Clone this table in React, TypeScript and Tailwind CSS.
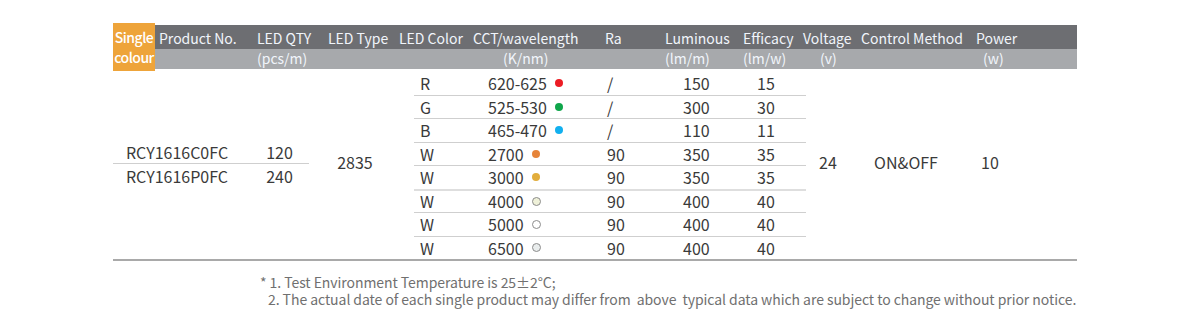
const font = { fontFamily: '"Noto Sans CJK SC", "Noto Sans", sans-serif' };

type Row = { color: string; cct: string; dot: string; ra: string; lum: string; eff: string };

const rows: Row[] = [
  { color: 'R', cct: '620-625', dot: 'w-[8px] h-[8px] bg-[#ec1c24]', ra: '/', lum: '150', eff: '15' },
  { color: 'G', cct: '525-530', dot: 'w-[8px] h-[8px] bg-[#0fa64b]', ra: '/', lum: '300', eff: '30' },
  { color: 'B', cct: '465-470', dot: 'w-[8px] h-[8px] bg-[#12b0ef]', ra: '/', lum: '110', eff: '11' },
  { color: 'W', cct: '2700', dot: 'w-[8px] h-[8px] bg-[#e6843a]', ra: '90', lum: '350', eff: '35' },
  { color: 'W', cct: '3000', dot: 'w-[8px] h-[8px] bg-[#e2ad3c]', ra: '90', lum: '350', eff: '35' },
  { color: 'W', cct: '4000', dot: 'w-[9px] h-[9px] bg-[#eff1d9] border border-[#8c8c8c]', ra: '90', lum: '400', eff: '40' },
  { color: 'W', cct: '5000', dot: 'w-[9px] h-[9px] bg-white border border-[#8c8c8c]', ra: '90', lum: '400', eff: '40' },
  { color: 'W', cct: '6500', dot: 'w-[9px] h-[9px] bg-[#e9eded] border border-[#8c8c8c]', ra: '90', lum: '400', eff: '40' },
];

export default function App() {
  return (
    <div className="w-[1187px] h-[319px] bg-white overflow-hidden pt-[23px] pl-[113px]" style={font}>
      <div className="w-[964px]">
        {/* header */}
        <div className="flex">
          <div className="w-[42px] h-[48px] bg-[#eea43a] text-white text-[14px] leading-[20px] font-medium flex flex-col items-center justify-center tracking-[-0.5px]">
            <span>Single</span>
            <span>colour</span>
          </div>
          <div className="flex-1 mt-[2px] text-[14px] text-[#f1f5fb] whitespace-nowrap">
            <div className="h-[24px] bg-[#6d6e72] flex items-end pb-[1px] leading-[20px]">
              <div className="w-[4px]" />
              <div className="w-[98px]">Product No.</div>
              <div className="w-[71px]">LED QTY</div>
              <div className="w-[71px]">LED Type</div>
              <div className="w-[74px]">LED Color</div>
              <div className="w-[132px]">CCT/wavelength</div>
              <div className="w-[60px]">Ra</div>
              <div className="w-[78px]">Luminous</div>
              <div className="w-[60px]">Efficacy</div>
              <div className="w-[58px]">Voltage</div>
              <div className="w-[115px]">Control Method</div>
              <div className="flex-1">Power</div>
            </div>
            <div className="h-[20px] bg-[#a7a9ac] flex items-start leading-[18px]">
              <div className="w-[102px]" />
              <div className="w-[246px]">(pcs/m)</div>
              <div className="w-[162px]">(K/nm)</div>
              <div className="w-[78px]">(lm/m)</div>
              <div className="w-[77px]">(lm/w)</div>
              <div className="w-[163px]">(v)</div>
              <div className="flex-1">(w)</div>
            </div>
          </div>
        </div>

        {/* body */}
        <div className="flex border-b-2 border-[#a9a9a9] text-[16px] text-[#3a3a3a] whitespace-nowrap">
          <div className="w-[196px] flex flex-col justify-center pb-[2px]">
            <div className="flex h-[24px] items-center border-b border-[#cfcfcf]">
              <div className="w-[128px] text-center">RCY1616C0FC</div>
              <div className="flex-1 text-center pl-[9px]">120</div>
            </div>
            <div className="flex h-[24px] items-center">
              <div className="w-[128px] text-center">RCY1616P0FC</div>
              <div className="flex-1 text-center pl-[9px]">240</div>
            </div>
          </div>
          <div className="w-[105px] flex items-center justify-center pr-[13px] pb-[6px]">2835</div>
          <div className="w-[392px] flex flex-col">
            {rows.map((r, i) => (
              <div
                key={i}
                className={`flex items-center h-[23.5px] ${i === 0 ? '' : i === 5 ? 'border-t-2 border-[#dedede]' : 'border-t border-[#cfcfcf]'}`}
              >
                <div className="w-[74px] pl-[6px]">{r.color}</div>
                <div className="w-[119px] flex items-center">
                  <span>{r.cct}</span>
                  <span className={`ml-[8px] rounded-full ${r.dot}`} />
                </div>
                <div className="w-[76px]">{r.ra}</div>
                <div className="w-[74px]">{r.lum}</div>
                <div className="flex-1">{r.eff}</div>
              </div>
            ))}
          </div>
          <div className="flex-1 flex items-center pb-[6px]">
            <div className="w-[44px] text-center">24</div>
            <div className="w-[112px] text-center">ON&amp;OFF</div>
            <div className="w-[56px] text-center">10</div>
          </div>
        </div>

        {/* notes */}
        <div className="pt-[13px] pl-[147px] text-[14px] leading-[17px] text-[#707070] tracking-[-0.06px] whitespace-nowrap">
          <div>* 1. Test Environment Temperature is 25±2°C;</div>
          <div className="pl-[8px]">2. The actual date of each single product may differ from&nbsp; above&nbsp; typical data which are subject to change without prior notice.</div>
        </div>
      </div>
    </div>
  );
}
